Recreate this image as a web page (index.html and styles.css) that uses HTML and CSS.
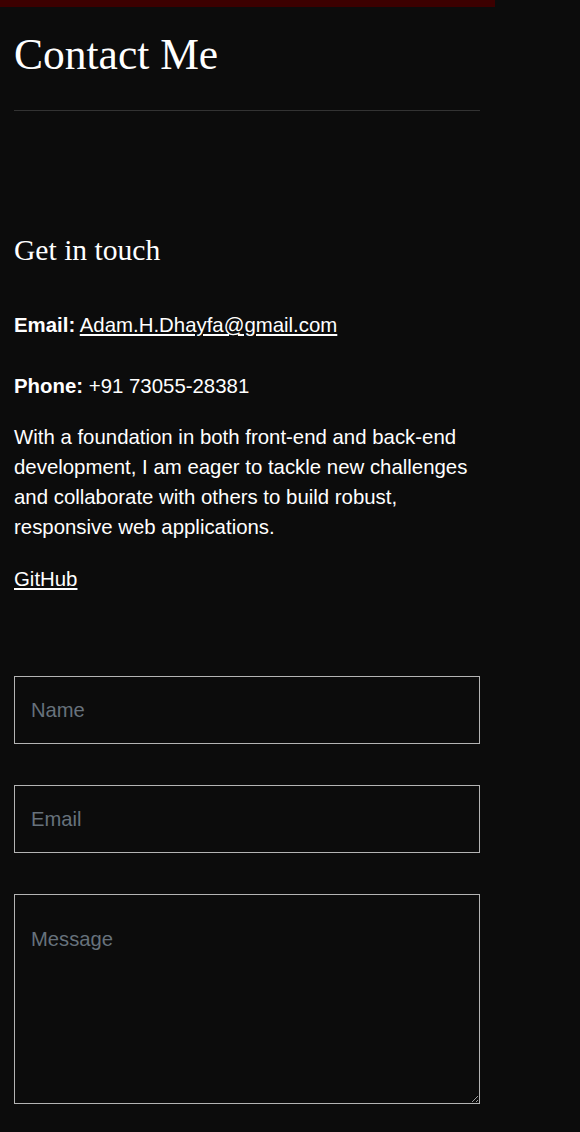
FILE: index.html
```html
<!DOCTYPE html>
<html lang="en">
<head>
<meta charset="utf-8">
<title>Contact Me</title>
<link rel="stylesheet" href="styles.css">
</head>
<body>
<div class="page">
  <div class="topbar"></div>
  <div class="container">
    <h1 class="title">Contact Me</h1>
    <hr class="rule">
    <section class="info">
      <h2 class="subtitle">Get in touch</h2>
      <p class="line line-email"><strong>Email:</strong> <a href="#">Adam.H.Dhayfa@gmail.com</a></p>
      <p class="line line-phone"><strong>Phone:</strong> +91 73055-28381</p>
      <p class="line line-about">With a foundation in both front-end and back-end development, I am eager to tackle new challenges and collaborate with others to build robust, responsive web applications.</p>
      <p class="line line-github"><a href="#">GitHub</a></p>
    </section>
    <form class="form">
      <input class="field" type="text" placeholder="Name">
      <input class="field" type="email" placeholder="Email">
      <textarea class="field area" placeholder="Message"></textarea>
    </form>
  </div>
</div>
</body>
</html>
```

FILE: styles.css
```css
html, body {
  margin: 0;
  padding: 0;
  background: #0c0c0c;
  color: #ffffff;
}

.page {
  width: 495px;
}

.topbar {
  height: 7px;
  background: #3c0000;
}

.container {
  padding: 0 15px 0 14px;
}

.title {
  font-family: "Liberation Serif", "Times New Roman", serif;
  font-weight: normal;
  font-size: 43.5px;
  line-height: normal;
  margin: 22px 0 0 0;
}

.rule {
  border: 0;
  height: 1px;
  background: #333333;
  margin: 31px 0 0 0;
}

.info {
  padding-top: 123px;
}

.subtitle {
  font-family: "Liberation Serif", "Times New Roman", serif;
  font-weight: normal;
  font-size: 29.6px;
  line-height: normal;
  margin: 0;
}

.line {
  font-family: "Liberation Sans", Arial, sans-serif;
  font-size: 20.4px;
  line-height: 30px;
  margin: 0;
}

.line a {
  color: #ffffff;
}

.line-email {
  margin-top: 43px;
}

.line-phone {
  margin-top: 31px;
}

.line-about {
  margin-top: 21px;
}

.line-github {
  margin-top: 22px;
}

.form {
  display: flex;
  flex-direction: column;
  gap: 41px;
  padding-top: 82px;
}

.field {
  box-sizing: border-box;
  width: 466px;
  height: 68px;
  margin: 0;
  padding: 0 16px;
  background: #0c0c0c;
  border: 1px solid #b4b4b4;
  border-radius: 0;
  color: #ffffff;
  font-family: "Liberation Sans", Arial, sans-serif;
  font-size: 20.2px;
  outline: none;
}

.field::placeholder {
  color: #67727c;
  opacity: 1;
}

.area {
  height: 210px;
  padding: 33px 16px 16px 16px;
  line-height: normal;
  display: block;
}
```
